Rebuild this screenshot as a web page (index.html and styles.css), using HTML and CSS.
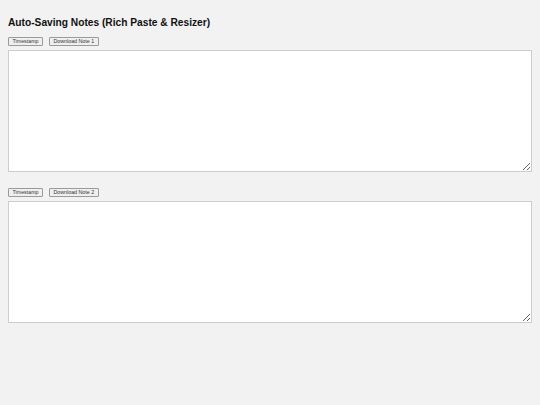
FILE: index.html
```html
<!DOCTYPE html>
<html lang="en">
<head>
  <meta charset="UTF-8" />
  <title>Auto-Saving Notes</title>
  <link rel="stylesheet" href="styles.css">
</head>
<body>
  <h1 class="title">Auto-Saving Notes (Rich Paste &amp; Resizer)</h1>

  <div class="note">
    <div class="toolbar">
      <button class="btn">Timestamp</button>
      <button class="btn">Download Note 1</button>
    </div>
    <textarea class="editor"></textarea>
  </div>

  <div class="note">
    <div class="toolbar">
      <button class="btn">Timestamp</button>
      <button class="btn">Download Note 2</button>
    </div>
    <textarea class="editor"></textarea>
  </div>
</body>
</html>
```

FILE: styles.css
```css
body {
  margin: 0;
  padding: 8px;
  background: #f2f2f2;
  font-family: "Liberation Sans", Arial, sans-serif;
  color: #111;
}
.title {
  font-size: 10.2px;
  line-height: 12px;
  font-weight: bold;
  margin: 9px 0 8px;
}
.note {
  margin-bottom: 16px;
}
.toolbar {
  display: flex;
  gap: 6px;
  margin-bottom: 4px;
}
.btn {
  font-family: "Liberation Sans", Arial, sans-serif;
  font-size: 5.3px;
  line-height: 5px;
  padding: 0 3.5px;
  margin: 0;
  height: 9px;
  background: #efefef;
  border: 1px solid #9a9a9a;
  border-radius: 1px;
  color: #333;
}
.editor {
  display: block;
  box-sizing: border-box;
  width: 100%;
  height: 122px;
  margin: 0;
  background: #fff;
  border: 1px solid #cdcdcd;
  resize: vertical;
}
```
